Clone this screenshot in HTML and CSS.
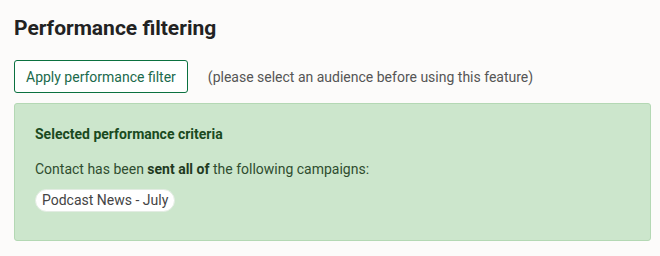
FILE: index.html
```html
<!DOCTYPE html>
<html>
<head>
<meta charset="utf-8">
<link rel="stylesheet" href="styles.css">
</head>
<body>
<div class="page">
  <h2 class="title">Performance filtering</h2>
  <div class="actions">
    <button class="btn">Apply performance filter</button>
    <span class="hint">(please select an audience before using this feature)</span>
  </div>
  <div class="criteria">
    <div class="criteria-title">Selected performance criteria</div>
    <p class="criteria-text">Contact has been <strong>sent all of</strong> the following campaigns:</p>
    <div class="pills"><span class="pill">Podcast News - July</span></div>
  </div>
</div>
</body>
</html>
```
FILE: styles.css
```css
html, body { margin: 0; padding: 0; }
body {
  background: #fcfbfa;
  font-family: Roboto, "Liberation Sans", sans-serif;
  color: #333;
  width: 660px;
  height: 256px;
  overflow: hidden;
}
.page { padding: 14px 9px 0 14px; }
.title {
  margin: 0;
  font-size: 21px;
  font-weight: 700;
  color: #222;
  line-height: 28px;
}
.actions {
  display: flex;
  align-items: center;
  gap: 20px;
  margin-top: 18px;
}
.btn {
  font-family: inherit;
  font-size: 14px;
  color: #1b6a4c;
  background: #fff;
  border: 1px solid #0b7140;
  border-radius: 3px;
  height: 33px;
  padding: 0 11px;
}
.hint { font-size: 14px; color: #555; }
.criteria {
  margin-top: 10px;
  background: #cce6cc;
  border: 1px solid #b4d8b4;
  border-radius: 3px;
  padding: 21px 20px 25px 20px;
  height: 90px;
  color: #24512a;
}
.criteria-title {
  font-size: 14px;
  font-weight: 700;
  color: #1a4a1e;
  line-height: 18px;
}
.criteria-text {
  margin: 17px 0 0;
  font-size: 14px;
  line-height: 18px;
  color: #2f4d2f;
}
.criteria-text strong { color: #1f3a1f; }
.pills { margin-top: 11px; }
.pill {
  display: inline-block;
  background: #fff;
  border: 1px solid #e2ece2;
  border-radius: 12px;
  padding: 0 6px;
  height: 21px;
  line-height: 21px;
  font-size: 14px;
  color: #444;
}
```
